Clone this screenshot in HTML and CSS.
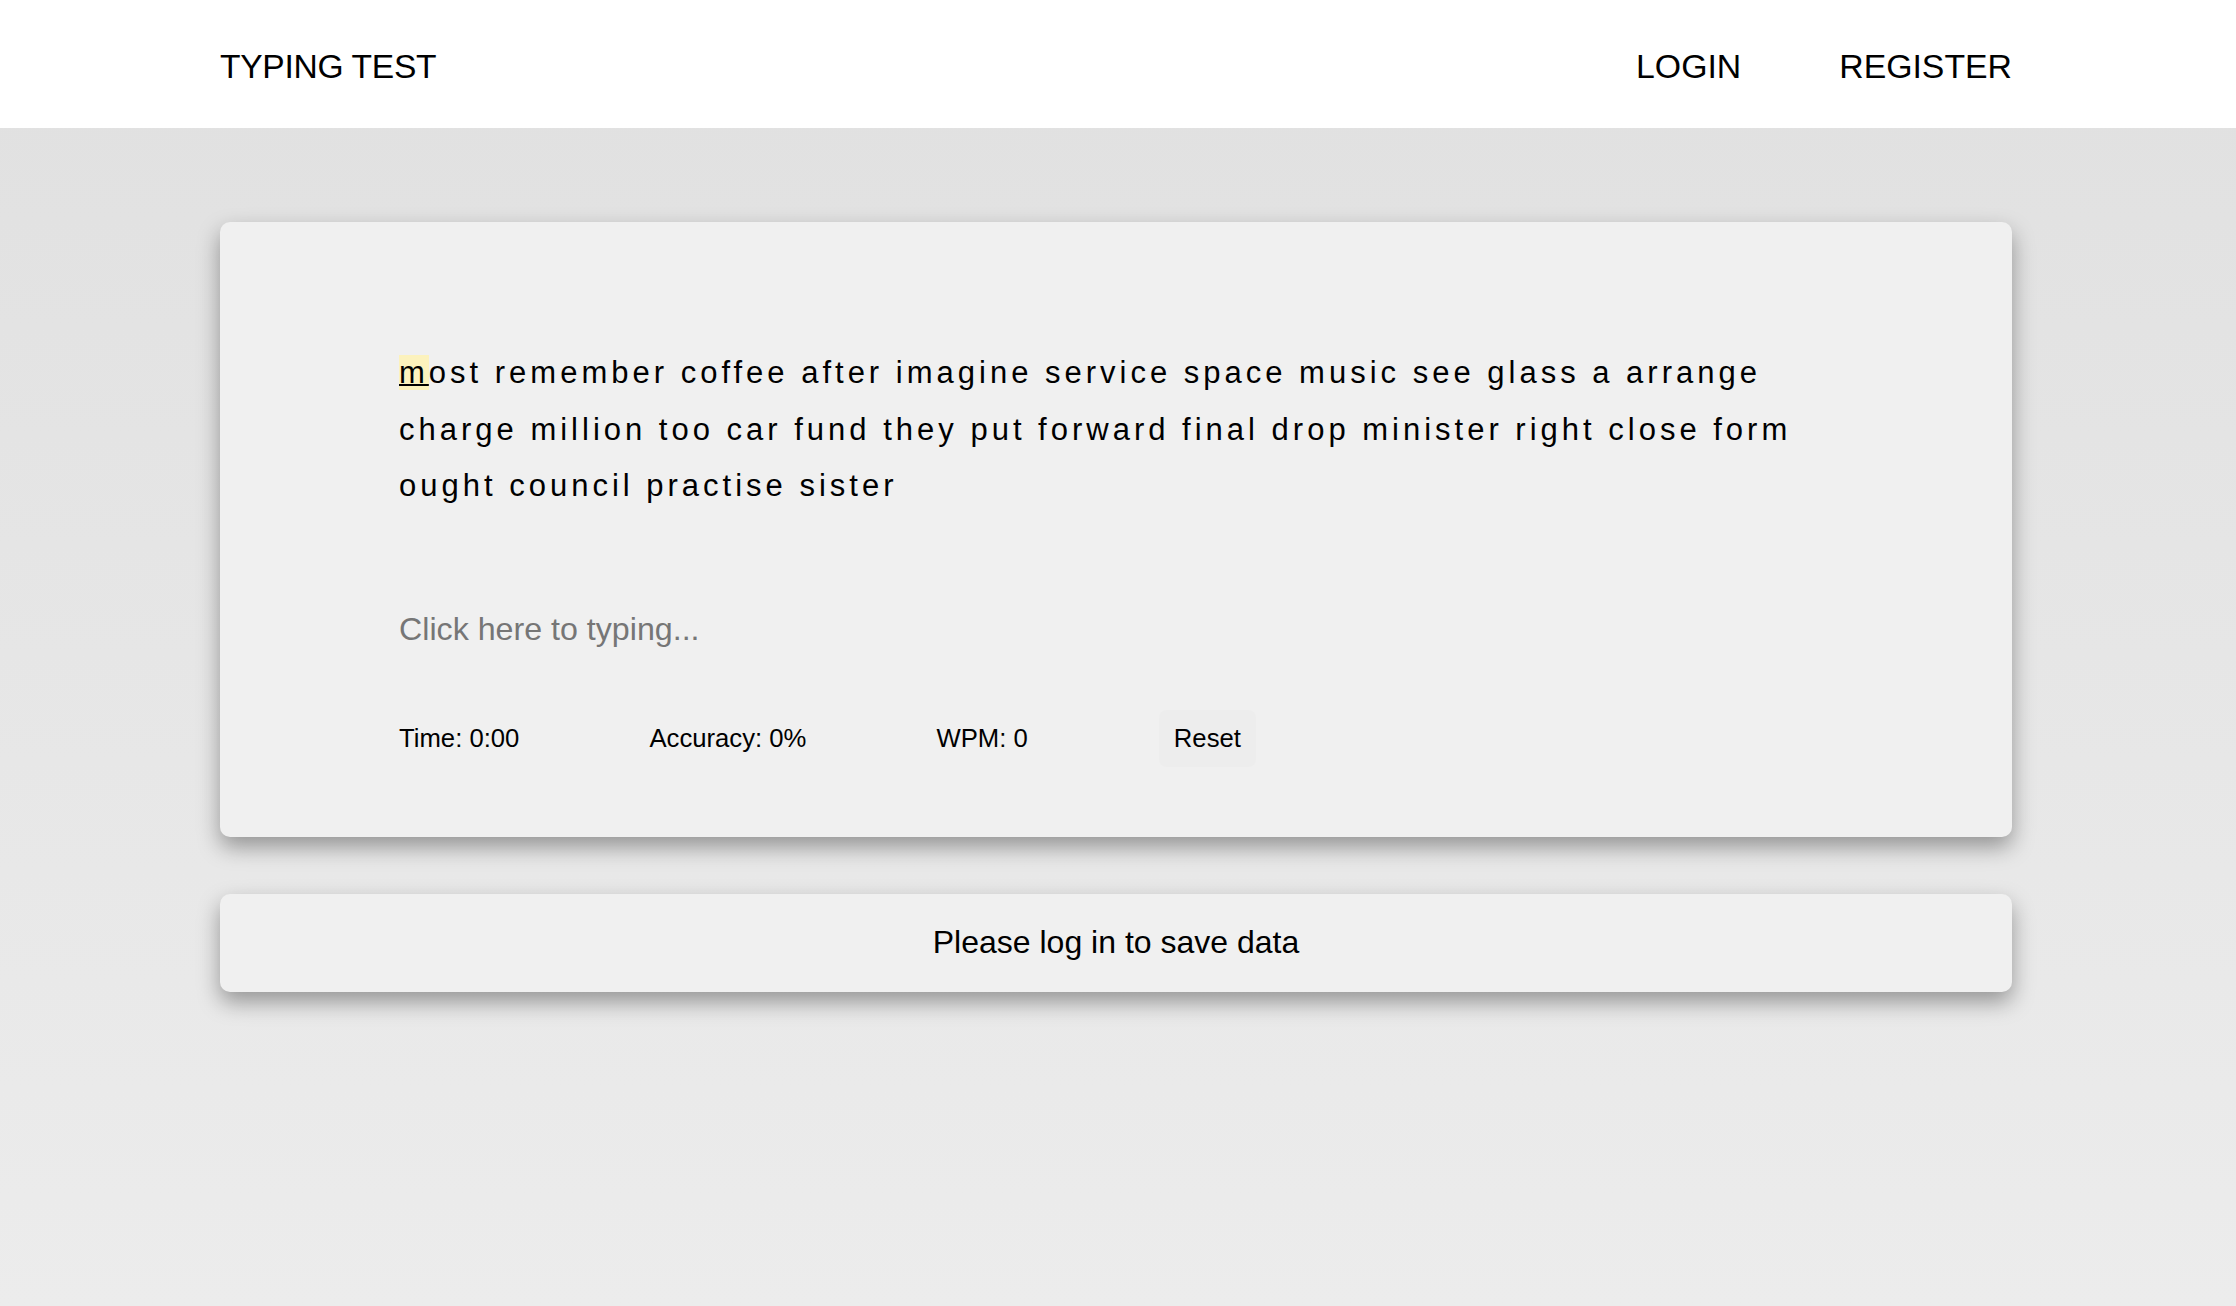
FILE: index.html
```html
<!DOCTYPE html>
<html lang="en">
<head>
<meta charset="utf-8">
<title>Typing Test</title>
<link rel="stylesheet" href="styles.css">
</head>
<body>
<header class="topbar">
  <div class="wrap topbar-inner">
    <div class="brand">TYPING TEST</div>
    <nav class="nav">
      <a class="nav-link" href="#">LOGIN</a>
      <a class="nav-link" href="#">REGISTER</a>
    </nav>
  </div>
</header>
<main class="wrap main">
  <section class="card test-card">
    <p class="words"><span class="current">m</span>ost remember coffee after imagine service space music see glass a arrange charge million too car fund they put forward final drop minister right close form ought council practise sister</p>
    <input class="typing-input" type="text" placeholder="Click here to typing...">
    <div class="stats">
      <span class="stat">Time: 0:00</span>
      <span class="stat">Accuracy: 0%</span>
      <span class="stat">WPM: 0</span>
      <button class="reset">Reset</button>
    </div>
  </section>
  <section class="card notice-card">
    <p class="notice">Please log in to save data</p>
  </section>
</main>
</body>
</html>
```

FILE: styles.css
```css
* { box-sizing: border-box; }
html, body { height: 100%; }
body {
  margin: 0;
  font-family: "Liberation Sans", Arial, Helvetica, sans-serif;
  color: #000;
  background: linear-gradient(#e0e0e0, #ececec) fixed;
  min-height: 100vh;
}
.wrap {
  width: 1792px;
  margin-left: 220px;
}
.topbar {
  background: #ffffff;
  height: 128px;
}
.topbar-inner {
  height: 128px;
  padding-top: 5px;
  display: flex;
  align-items: center;
  justify-content: space-between;
}
.brand {
  font-size: 33.6px;
  letter-spacing: -0.3px;
}
.nav {
  display: flex;
  gap: 98px;
}
.nav-link {
  font-size: 33.8px;
  color: #000;
  text-decoration: none;
}
.main {
  padding-top: 94px;
  display: flex;
  flex-direction: column;
  gap: 57px;
}
.card {
  background: #f0f0f0;
  border-radius: 10px;
  box-shadow: 0 10px 22px rgba(0, 0, 0, 0.36);
}
.test-card {
  padding: 123px 179px 70px;
}
.words {
  margin: 0;
  font-size: 31px;
  line-height: 56.5px;
  letter-spacing: 4px;
}
.current {
  background: #fcf2bd;
  text-decoration: underline;
  text-decoration-thickness: 2px;
}
.typing-input {
  display: block;
  margin-top: 85px;
  width: 100%;
  height: 60px;
  padding: 0;
  border: none;
  outline: none;
  background: transparent;
  font-family: "Liberation Sans", Arial, Helvetica, sans-serif;
  font-size: 32.2px;
  color: #000;
}
.typing-input::placeholder {
  color: #767676;
}
.stats {
  margin-top: 50px;
  display: flex;
  align-items: center;
  gap: 130px;
  height: 57px;
}
.stat {
  font-size: 25.7px;
}
.reset {
  font-family: "Liberation Sans", Arial, Helvetica, sans-serif;
  font-size: 25.7px;
  color: #000;
  height: 57px;
  padding: 0 15px;
  margin-left: 1px;
  border: none;
  border-radius: 8px;
  background: #ededed;
}
.notice-card {
  height: 98px;
  display: flex;
  align-items: center;
  justify-content: center;
}
.notice {
  margin: 0;
  font-size: 32px;
}
```
